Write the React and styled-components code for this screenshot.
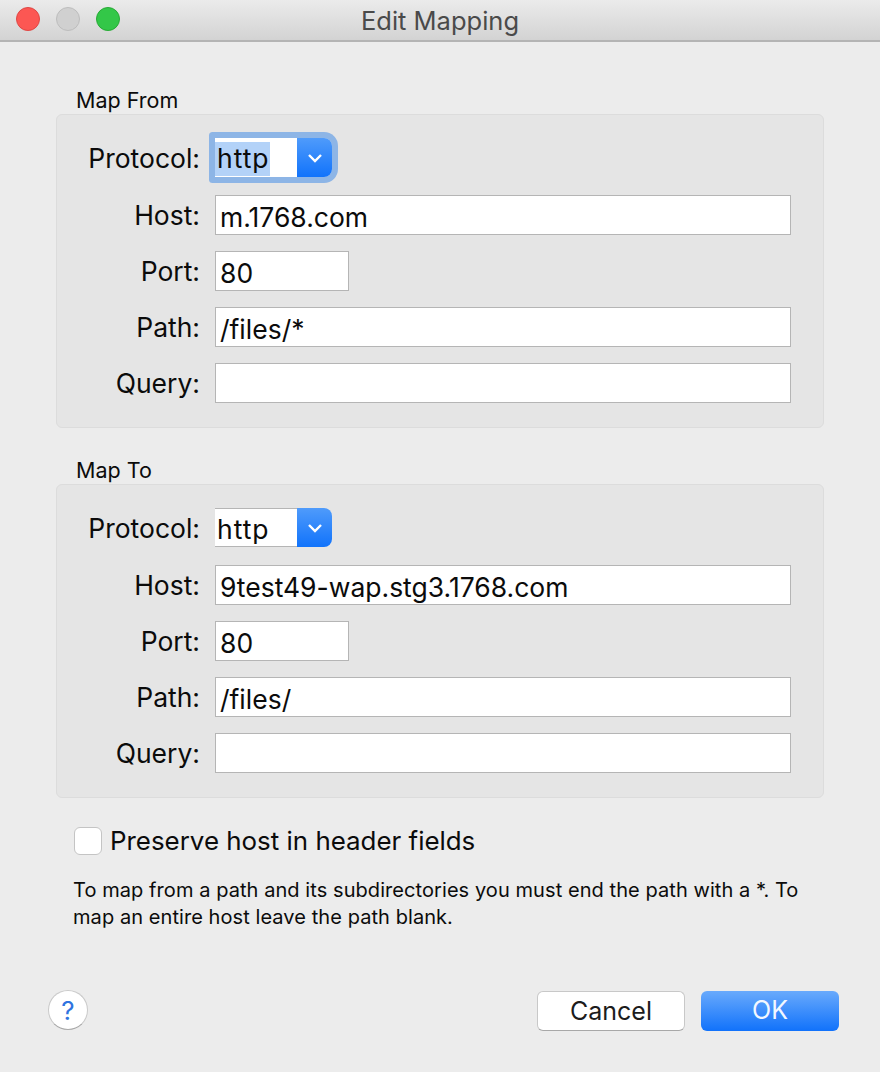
import React from 'react';
import styled, { createGlobalStyle } from 'styled-components';

const GlobalStyle = createGlobalStyle`
  html, body {
    margin: 0;
    padding: 0;
    background: #ececec;
  }
  * {
    box-sizing: border-box;
  }
`;

function Arrow() {
  return (
    <svg width="16" height="10" viewBox="0 0 16 10">
      <path d="M2 2 L8 8 L14 2" fill="none" stroke="#fff" strokeWidth="2.4" />
    </svg>
  );
}

function Mapping({ title, host, path, focused }) {
  return (
    <Section>
      <SectionTitle>{title}</SectionTitle>
      <Panel>
        <Label>Protocol:</Label>
        <Select $focused={focused}>
          <SelectValue $focused={focused}>
            <Selected $focused={focused}>http</Selected>
          </SelectValue>
          <SelectArrow>
            <Arrow />
          </SelectArrow>
        </Select>
        <Label>Host:</Label>
        <Field>{host}</Field>
        <Label>Port:</Label>
        <Field $short>80</Field>
        <Label>Path:</Label>
        <Field>{path}</Field>
        <Label>Query:</Label>
        <Field />
      </Panel>
    </Section>
  );
}

export default function App() {
  return (
    <Win>
      <GlobalStyle />
      <TitleBar>
        <Light $color="#fc5753" $edge="#df4744" />
        <Light $color="#d0d0d0" $edge="#bdbdbd" />
        <Light $color="#33c748" $edge="#27aa35" />
        <Title>Edit Mapping</Title>
      </TitleBar>
      <Body>
        <Mapping title="Map From" host="m.1768.com" path="/files/*" focused />
        <Mapping title="Map To" host="9test49-wap.stg3.1768.com" path="/files/" />
        <CheckRow>
          <Check />
          <CheckText>Preserve host in header fields</CheckText>
        </CheckRow>
        <Help>
          To map from a path and its subdirectories you must end the path with a *. To
          <br />
          map an entire host leave the path blank.
        </Help>
        <Footer>
          <HelpButton>?</HelpButton>
          <Buttons>
            <CancelButton>Cancel</CancelButton>
            <OkButton>OK</OkButton>
          </Buttons>
        </Footer>
      </Body>
    </Win>
  );
}

const Win = styled.div`
  width: 880px;
  height: 1072px;
  display: flex;
  flex-direction: column;
  background: #ececec;
  color: #0b0b0b;
  font-family: Inter, "Liberation Sans", sans-serif;
  overflow: hidden;
`;

const TitleBar = styled.div`
  position: relative;
  flex: none;
  height: 42px;
  display: flex;
  align-items: center;
  gap: 16px;
  padding: 0 16px 2px;
  background: linear-gradient(#ebebeb, #d3d3d3);
  border-bottom: 2px solid #b4b4b4;
`;

const Light = styled.span`
  width: 24px;
  height: 24px;
  border-radius: 50%;
  background: ${(p) => p.$color};
  border: 1px solid ${(p) => p.$edge};
`;

const Title = styled.div`
  position: absolute;
  left: 0;
  right: 0;
  top: 5px;
  text-align: center;
  font-size: 25.5px;
  line-height: 32px;
  color: #4a4a4a;
`;

const Body = styled.div`
  flex: 1;
  display: flex;
  flex-direction: column;
  padding: 44px 56px 0;
`;

const Section = styled.section`
  margin-bottom: 28px;
`;

const SectionTitle = styled.div`
  height: 28px;
  padding-left: 20px;
  font-size: 21.5px;
  line-height: 28px;
`;

const Panel = styled.div`
  width: 768px;
  display: grid;
  grid-template-columns: 143px 1fr;
  grid-template-rows: 41px repeat(4, 40px);
  column-gap: 15px;
  row-gap: 16px;
  padding: 23px 32px 24px 0;
  background: #e5e5e5;
  border: 1px solid #dcdcdc;
  border-radius: 6px;
`;

const Label = styled.div`
  text-align: right;
  font-size: 26.5px;
  line-height: 40px;
`;

const Select = styled.div`
  width: 117px;
  height: 39px;
  display: flex;
  border-radius: 1px 8px 8px 1px;
  box-shadow: ${(p) => (p.$focused ? '0 0 0 6px #8db5e6' : 'none')};
`;

const SelectValue = styled.div`
  flex: 1;
  padding-top: 4px;
  background: #fff;
  border: 1px solid #b5b5b5;
  border-width: ${(p) => (p.$focused ? '0' : '1px 0')};
  font-size: 26.5px;
  letter-spacing: 1px;
  line-height: 32px;
`;

const Selected = styled.span`
  display: inline-block;
  height: 34px;
  width: 55px;
  padding-left: 2px;
  background: ${(p) => (p.$focused ? '#b3d2f8' : 'transparent')};
`;

const SelectArrow = styled.div`
  width: 35px;
  display: flex;
  align-items: center;
  justify-content: center;
  background: linear-gradient(#4f9bfb, #1173fb);
  border-radius: 0 8px 8px 0;
`;

const Field = styled.div`
  width: ${(p) => (p.$short ? '134px' : '100%')};
  height: 40px;
  padding: 0 4px;
  background: #fff;
  border: 1px solid #b5b5b5;
  font-size: 26.5px;
  line-height: 42px;
`;

const CheckRow = styled.div`
  display: flex;
  align-items: center;
  gap: 8px;
  margin: 0 0 0 18px;
`;

const Check = styled.span`
  width: 28px;
  height: 28px;
  background: #fff;
  border: 1px solid #c4c4c4;
  border-radius: 6px;
`;

const CheckText = styled.span`
  font-size: 25.9px;
  line-height: 30px;
`;

const Help = styled.p`
  margin: 21px 0 0 17px;
  font-size: 20px;
  letter-spacing: 0.07px;
  line-height: 27px;
`;

const Footer = styled.div`
  margin: 59px -15px 0 -8px;
  display: flex;
  align-items: flex-start;
  justify-content: space-between;
`;

const HelpButton = styled.span`
  width: 40px;
  height: 40px;
  display: flex;
  align-items: center;
  justify-content: center;
  background: #fff;
  border: 1px solid #c9c9c9;
  border-bottom-color: #a9a9a9;
  border-radius: 50%;
  color: #2f74e0;
  font-size: 26px;
`;

const Buttons = styled.div`
  display: flex;
  gap: 16px;
  margin-top: 1px;
`;

const CancelButton = styled.div`
  width: 148px;
  height: 40px;
  background: #fff;
  border: 1px solid #c8c8c8;
  border-bottom-color: #a8a8a8;
  border-radius: 6px;
  text-align: center;
  font-size: 25px;
  line-height: 38px;
  color: #1c1c1c;
`;

const OkButton = styled.div`
  width: 138px;
  height: 40px;
  background: linear-gradient(#69aafc, #1172fb);
  border-radius: 6px;
  text-align: center;
  font-size: 25px;
  line-height: 39px;
  color: #f2f7ff;
`;
